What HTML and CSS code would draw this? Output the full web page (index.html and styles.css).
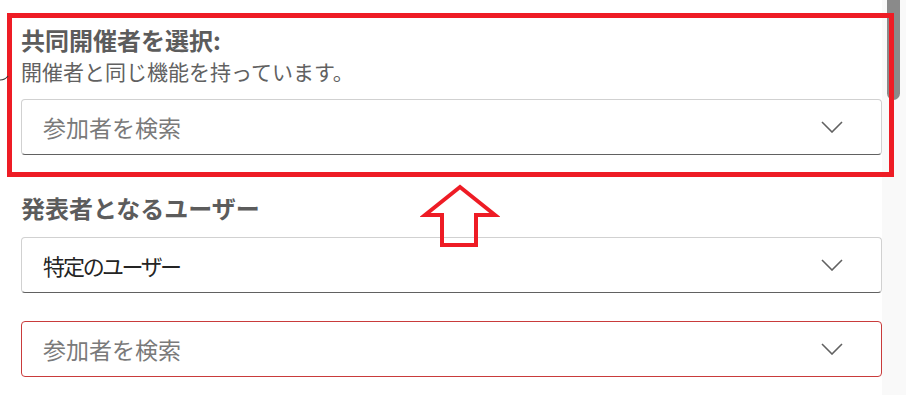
FILE: index.html
```html
<!DOCTYPE html>
<html lang="ja">
<head>
    <meta charset="UTF-8">
    <meta name="viewport" content="width=device-width, initial-scale=1.0">
    <title>共同開催者</title>
    <link rel="stylesheet" href="styles.css">
</head>
<body>

<div class="page">
    <div class="panel">
        <h2 class="title">共同開催者を選択:</h2>
        <p class="hint">開催者と同じ機能を持っています。</p>
        <div class="dropdown">
            <span class="placeholder">参加者を検索</span>
            <svg class="chevron" width="22" height="12" viewBox="0 0 22 12"><path d="M1 1 L11 11 L21 1" fill="none" stroke="#616161" stroke-width="1.6"/></svg>
        </div>

        <h2 class="title second">発表者となるユーザー</h2>
        <div class="dropdown">
            <span class="value">特定のユーザー</span>
            <svg class="chevron" width="22" height="12" viewBox="0 0 22 12"><path d="M1 1 L11 11 L21 1" fill="none" stroke="#616161" stroke-width="1.6"/></svg>
        </div>
        <div class="dropdown invalid">
            <span class="placeholder">参加者を検索</span>
            <svg class="chevron" width="22" height="12" viewBox="0 0 22 12"><path d="M1 1 L11 11 L21 1" fill="none" stroke="#616161" stroke-width="1.6"/></svg>
        </div>
    </div>

    <!-- scrollbar -->
    <div class="track"><div class="thumb"></div></div>

    <!-- annotations drawn on top -->
    <div class="mark-box"></div>
    <svg class="mark-arrow" width="80" height="66" viewBox="0 0 80 66">
        <polygon points="40,3 75,31 56,31 56,61 22,61 22,31 5,31" fill="none" stroke="#ee1c25" stroke-width="4"/>
    </svg>
    <svg class="mark-line" width="10" height="12" viewBox="0 0 10 12">
        <path d="M0 10 Q5 10 8 6" fill="none" stroke="#333" stroke-width="1.2"/>
    </svg>
</div>

</body>
</html>
```

FILE: styles.css
```css
body {
    margin: 0;
    font-family: "Noto Sans CJK JP", "Noto Sans", sans-serif;
    background: #fff;
}
.page {
    position: relative;
    width: 906px;
    height: 395px;
    overflow: hidden;
}
.panel {
    width: 861px;
    padding: 25px 0 0 21px;
}
.title {
    margin: 0;
    font-size: 24px;
    line-height: 30px;
    font-weight: bold;
    color: #5c5c5c;
}
.title.second {
    margin-top: 38px;
    margin-bottom: 14px;
}
.hint {
    margin: 3px 0 15px 0;
    font-size: 21px;
    line-height: 26px;
    color: #616161;
}
.dropdown {
    display: flex;
    align-items: center;
    justify-content: space-between;
    height: 54px;
    padding: 0 38px 0 21px;
    border: 1px solid #d1d1d1;
    border-bottom-color: #616161;
    border-radius: 4px;
    background: #fff;
    font-size: 23px;
}
.dropdown + .dropdown {
    margin-top: 28px;
}
.dropdown.invalid {
    border-color: #c93b3b;
}
.placeholder {
    color: #7a7a7a;
}
.value {
    color: #242424;
    font-size: 22px;
    font-feature-settings: "palt";
    letter-spacing: -2px;
}
.chevron {
    display: block;
}
.track {
    position: absolute;
    top: 0;
    right: 0;
    width: 24px;
    height: 395px;
    background: #f9f9f9;
}
.thumb {
    margin-left: 5px;
    width: 13px;
    height: 100px;
    background: #8a8a8a;
    border-radius: 0 0 7px 7px;
}
.mark-box {
    position: absolute;
    left: 7px;
    top: 13px;
    width: 877px;
    height: 154px;
    border: 5px solid #ee1c25;
}
.mark-arrow {
    position: absolute;
    left: 420px;
    top: 184px;
}
.mark-line {
    position: absolute;
    left: 0;
    top: 70px;
}
```
